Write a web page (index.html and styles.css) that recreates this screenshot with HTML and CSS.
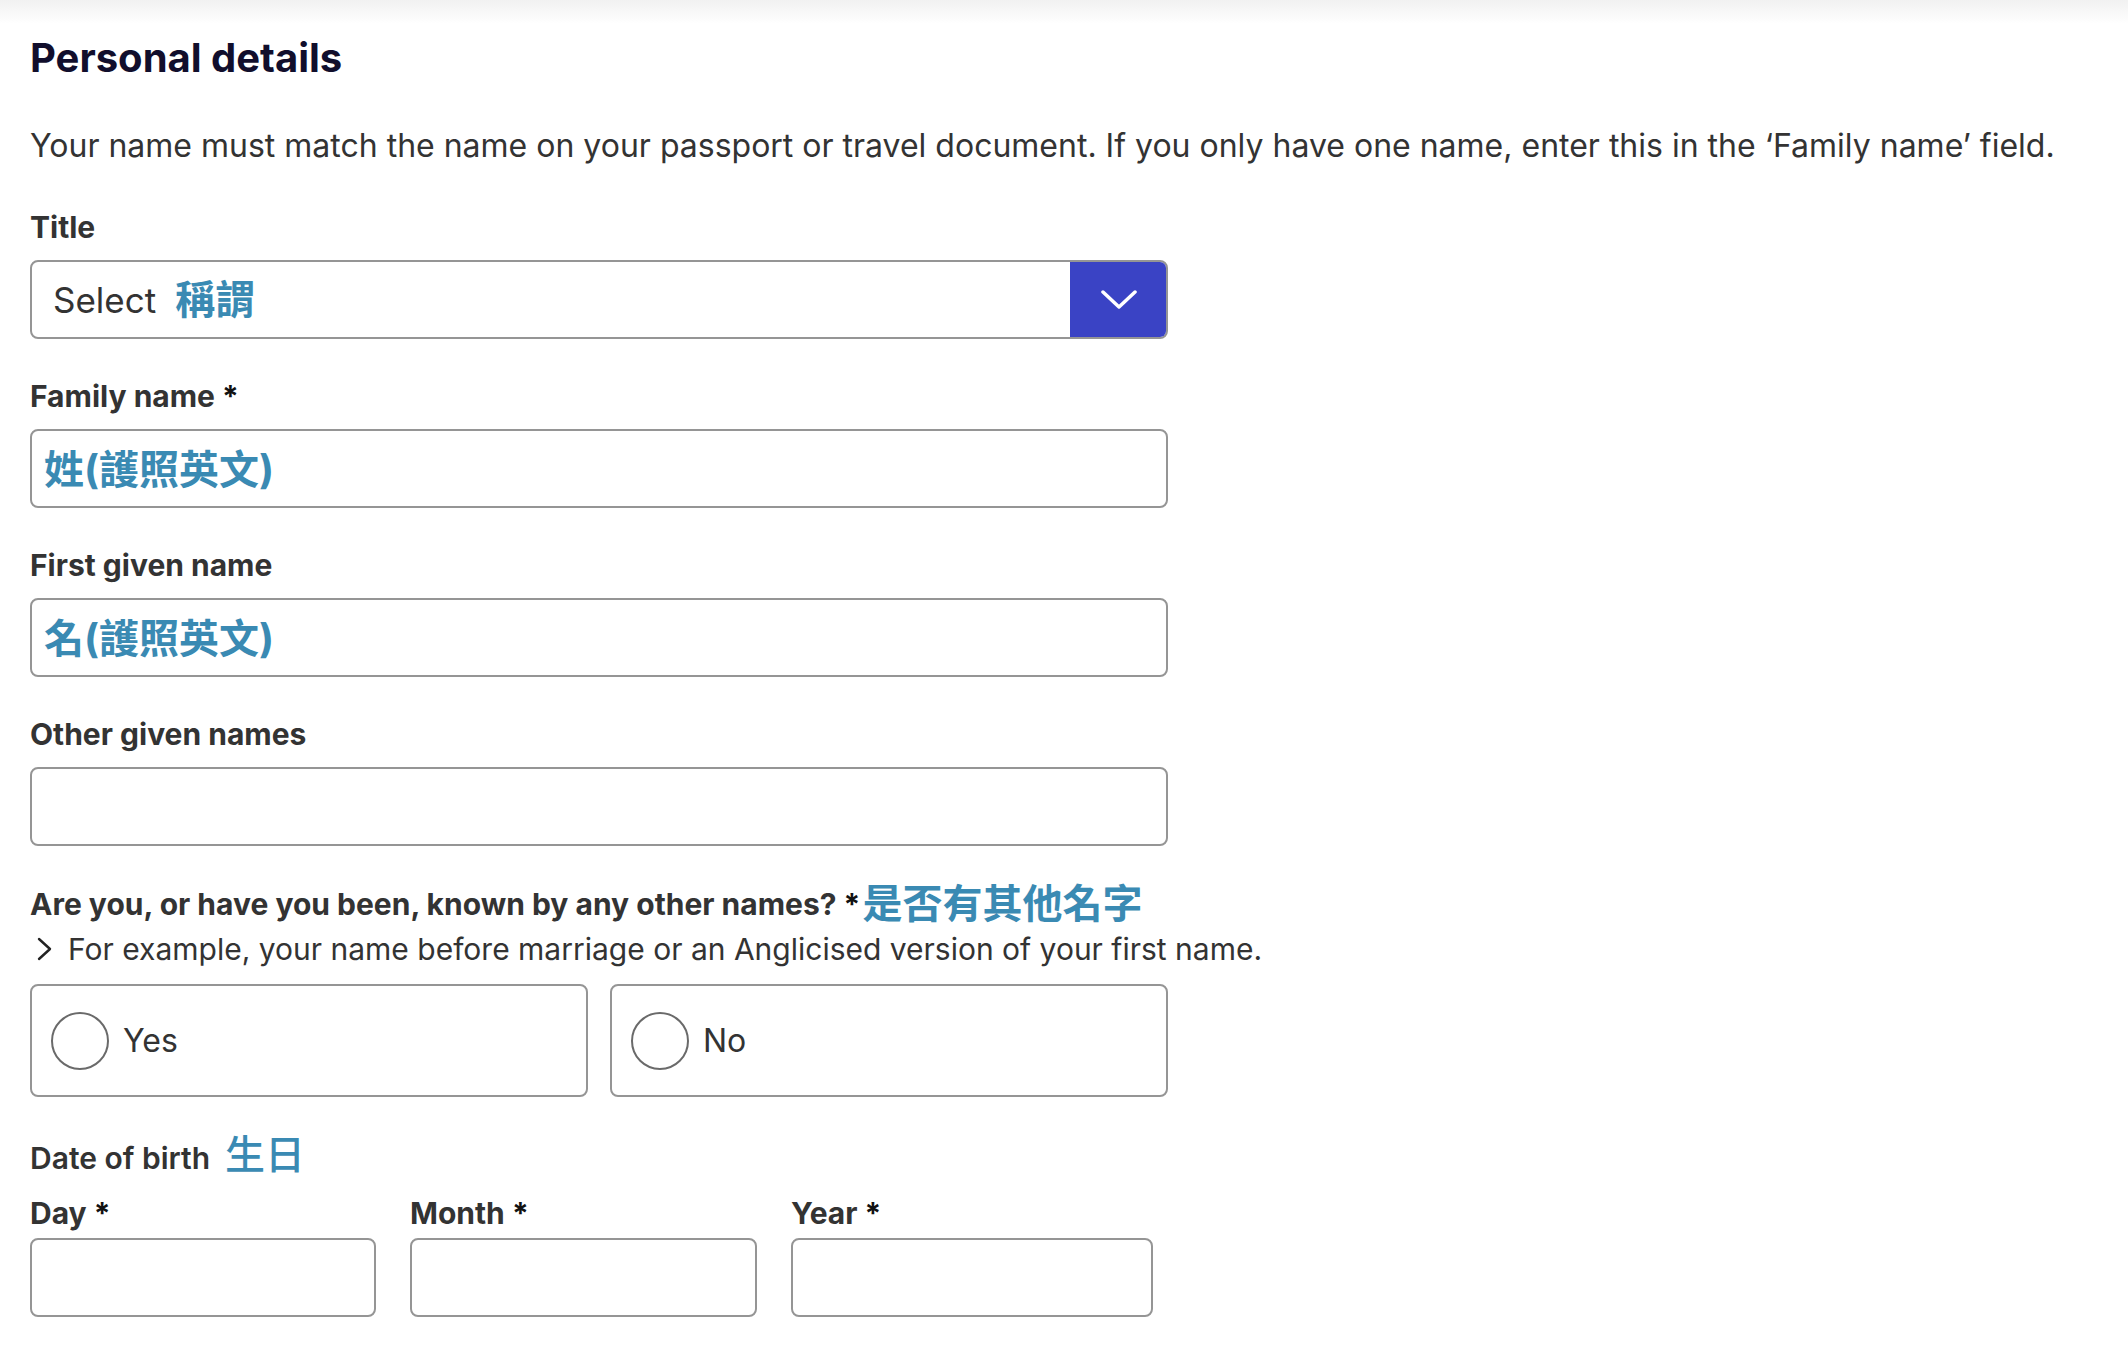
FILE: index.html
```html
<!DOCTYPE html>
<html lang="en">

<head>
  <meta charset="UTF-8">
  <meta name="viewport" content="width=device-width, initial-scale=1.0">
  <title>Personal details</title>
  <link rel="stylesheet" href="styles.css">
</head>

<body>
  <div class="top-shade"></div>
  <main class="page">
    <h1 class="page-title">Personal details</h1>
    <p class="intro">Your name must match the name on your passport or travel document. If you only have one name, enter this in the ‘Family name’ field.</p>

    <div class="field">
      <label class="label">Title</label>
      <div class="select">
        <span class="select-text">Select<span class="zh zh-bold">稱謂</span></span>
        <span class="select-btn">
          <svg width="36" height="20" viewBox="0 0 36 20"><path d="M2 2 L18 17 L34 2" fill="none" stroke="#fff" stroke-width="3.5" stroke-linecap="round" stroke-linejoin="round"/></svg>
        </span>
      </div>
    </div>

    <div class="field">
      <label class="label" for="familyName">Family name <span class="req">*</span></label>
      <input class="text-input" id="familyName" type="text" placeholder="姓(護照英文)">
    </div>

    <div class="field">
      <label class="label" for="firstName">First given name</label>
      <input class="text-input" id="firstName" type="text" placeholder="名(護照英文)">
    </div>

    <div class="field">
      <label class="label" for="otherNames">Other given names</label>
      <input class="text-input" id="otherNames" type="text">
    </div>

    <div class="field field-question">
      <div class="label">Are you, or have you been, known by any other names? <span class="req">*</span><span class="zh zh-bold zh-q">是否有其他名字</span></div>
      <div class="hint">
        <svg width="16" height="24" viewBox="0 0 16 24"><path d="M3 2 L14 12 L3 22" fill="none" stroke="#222" stroke-width="2.4" stroke-linecap="round" stroke-linejoin="round"/></svg>
        <span>For example, your name before marriage or an Anglicised version of your first name.</span>
      </div>
      <div class="radios">
        <label class="radio"><span class="circle"></span>Yes</label>
        <label class="radio"><span class="circle"></span>No</label>
      </div>
    </div>

    <div class="dob">
      <div class="dob-title">Date of birth<span class="zh">生日</span></div>
      <div class="dob-row">
        <div class="dob-col day">
          <label class="label">Day <span class="req">*</span></label>
          <input class="text-input" type="text">
        </div>
        <div class="dob-col month">
          <label class="label">Month <span class="req">*</span></label>
          <input class="text-input" type="text">
        </div>
        <div class="dob-col year">
          <label class="label">Year <span class="req">*</span></label>
          <input class="text-input" type="text">
        </div>
      </div>
    </div>
  </main>
</body>

</html>
```

FILE: styles.css
```css
body {
  font-family: Inter, "Noto Sans CJK TC", sans-serif;
  margin: 0;
  padding: 0;
  background-color: #fff;
  color: #333;
}

.top-shade {
  height: 24px;
  background: linear-gradient(#f1f1f1, #fff);
}

.page {
  padding: 10px 0 0 30px;
}

.page-title {
  margin: 0;
  font-size: 40px;
  line-height: 48px;
  font-weight: 700;
  color: #110e2c;
}

.intro {
  margin: 44px 0 0;
  font-size: 32px;
  line-height: 40px;
  color: #333;
}

.field {
  width: 1138px;
  margin-top: 39px;
}

.intro + .field {
  margin-top: 43px;
}

.field-question {
  margin-top: 40px;
}

.label {
  display: block;
  font-size: 30px;
  line-height: 36px;
  font-weight: 700;
  color: #333;
}

.req {
  color: #111;
}

.zh {
  font-family: Inter, "Noto Sans CJK TC", sans-serif;
  font-size: 40px;
  line-height: 20px;
  font-weight: 500;
  color: #3a8ab3;
  margin-left: 19px;
}

.zh-bold {
  font-weight: 700;
}

.zh-q {
  margin-left: 2px;
  vertical-align: -3px;
}

.select {
  display: flex;
  height: 79px;
  margin-top: 15px;
  border: 2px solid #959595;
  border-radius: 8px;
  box-sizing: border-box;
  overflow: hidden;
}

.select-text {
  flex: 1;
  display: flex;
  align-items: center;
  padding-left: 21px;
  font-size: 35px;
  color: #333;
}

.select-btn {
  width: 98px;
  margin: -2px -2px -2px 0;
  display: flex;
  align-items: center;
  justify-content: center;
  background-color: #3a43c5;
  border-radius: 0 8px 8px 0;
}

.text-input {
  display: block;
  width: 100%;
  height: 79px;
  margin-top: 15px;
  padding: 8px 12px 0;
  box-sizing: border-box;
  border: 2px solid #959595;
  border-radius: 8px;
  background-color: #fff;
  font-family: Inter, "Noto Sans CJK TC", sans-serif;
  font-size: 32px;
  color: #333;
  outline: none;
}

.text-input::placeholder {
  font-size: 40px;
  font-weight: 700;
  color: #3a8ab3;
}

.hint {
  display: flex;
  align-items: center;
  gap: 16px;
  margin-top: 9px;
  padding-left: 6px;
  font-size: 30px;
  line-height: 36px;
  color: #333;
  white-space: nowrap;
}

.hint svg {
  flex-shrink: 0;
}

.radios {
  display: grid;
  grid-template-columns: 1fr 1fr;
  gap: 22px;
  margin-top: 17px;
}

.radio {
  display: flex;
  align-items: center;
  gap: 14px;
  height: 113px;
  padding-left: 19px;
  box-sizing: border-box;
  border: 2px solid #959595;
  border-radius: 8px;
  font-size: 32px;
  color: #333;
}

.circle {
  width: 58px;
  height: 58px;
  box-sizing: border-box;
  border: 2px solid #6a6a6a;
  border-radius: 50%;
}

.dob {
  margin-top: 43px;
}

.dob-title {
  font-size: 30px;
  line-height: 36px;
  font-weight: 600;
  color: #333;
}

.dob-title .zh {
  margin-left: 15px;
}

.dob-row {
  display: flex;
  gap: 34px;
  margin-top: 19px;
}

.dob-row .text-input {
  margin-top: 7px;
}

.day {
  width: 346px;
}

.month {
  width: 347px;
}

.year {
  width: 362px;
}
```
